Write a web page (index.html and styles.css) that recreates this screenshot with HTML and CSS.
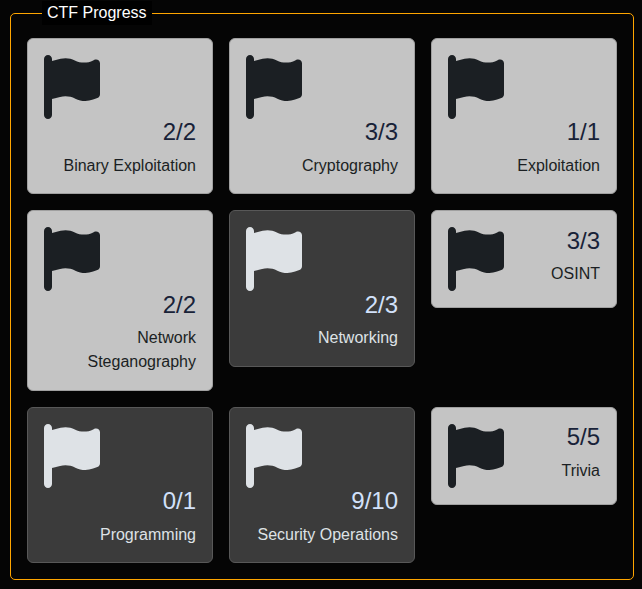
FILE: index.html
```html
<!DOCTYPE html>
<html lang="en">
<head>
<meta charset="utf-8">
<title>CTF Progress</title>
<link rel="stylesheet" href="styles.css">
</head>
<body>
<svg width="0" height="0" class="defs" aria-hidden="true"><symbol id="flag" viewBox="0 0 448 512"><path d="M64 32C64 14.300 49.700 0 32 0S0 14.300 0 32V480c0 17.700 14.300 32 32 32s32-14.300 32-32V352l64.300-16.100c41.100-10.300 84.600-5.500 122.500 13.400c44.200 22.100 95.500 24.800 141.700 7.400l34.700-13c12.500-4.700 20.800-16.600 20.800-30V66.100c0-23-24.200-38-44.800-27.700l-9.600 4.800c-46.300 23.200-100.800 23.200-147.100 0c-35.100-17.600-75.400-22-113.500-12.500L64 48V32z"/></symbol></svg>
<fieldset class="progress">
<legend>CTF Progress</legend>
<div class="grid">
<div class="card done"><svg class="flag"><use href="#flag"/></svg><div class="info"><h4>2/2</h4><p>Binary Exploitation</p></div></div>
<div class="card done"><svg class="flag"><use href="#flag"/></svg><div class="info"><h4>3/3</h4><p>Cryptography</p></div></div>
<div class="card done"><svg class="flag"><use href="#flag"/></svg><div class="info"><h4>1/1</h4><p>Exploitation</p></div></div>
<div class="card done"><svg class="flag"><use href="#flag"/></svg><div class="info"><h4>2/2</h4><p>Network Steganography</p></div></div>
<div class="card"><svg class="flag"><use href="#flag"/></svg><div class="info"><h4>2/3</h4><p>Networking</p></div></div>
<div class="card done short"><svg class="flag"><use href="#flag"/></svg><div class="info"><h4>3/3</h4><p>OSINT</p></div></div>
<div class="card"><svg class="flag"><use href="#flag"/></svg><div class="info"><h4>0/1</h4><p>Programming</p></div></div>
<div class="card"><svg class="flag"><use href="#flag"/></svg><div class="info"><h4>9/10</h4><p>Security Operations</p></div></div>
<div class="card done short"><svg class="flag"><use href="#flag"/></svg><div class="info"><h4>5/5</h4><p>Trivia</p></div></div>
</div>
</fieldset>
</body>
</html>
```
FILE: styles.css
```css
* { box-sizing: border-box; }
body {
  margin: 0;
  background: #050505;
  font: 16px/24px "Liberation Sans", Arial, sans-serif;
}
.defs { display: block; }
.progress {
  margin: 1px 8px 0 10px;
  padding: 13px 16px 16px;
  border: 1px solid #ffa500;
  border-radius: 5px;
  min-width: 0;
}
legend {
  margin-left: 15px;
  padding: 0 5px;
  background: #000;
  color: #fff;
}
.grid {
  display: grid;
  grid-template-columns: repeat(3, 186px);
  gap: 16px;
  align-items: start;
}
.card {
  display: flex;
  flex-wrap: wrap;
  padding: 16px;
  border: 1px solid #585858;
  border-radius: 6px;
  background: #3b3b3b;
  color: #dee2e6;
}
.done {
  background: #c4c4c4;
  border-color: #a0a0a0;
  color: #1b1f23;
}
.flag {
  flex: none;
  width: 56px;
  height: 64px;
  fill: currentColor;
}
.info {
  width: 100%;
  margin: 0.4px 0 -0.4px;
  text-align: right;
}
.short { flex-wrap: nowrap; }
.short .info {
  flex: 1;
  width: auto;
}
h4 {
  margin: 0 0 8px;
  font-size: 24px;
  font-weight: 400;
  line-height: 1.1;
  color: #d2e1fa;
}
.done h4 { color: #182238; }
p { margin: 0; }
```
